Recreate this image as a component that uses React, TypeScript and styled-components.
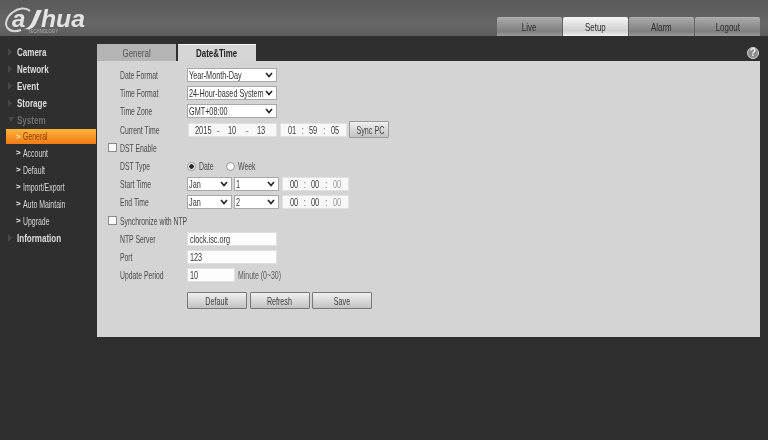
import type { ReactNode } from 'react';
import styled, { createGlobalStyle } from 'styled-components';

const topTabs = ['Live', 'Setup', 'Alarm', 'Logout'];
const subItems = ['General', 'Account', 'Default', 'Import/Export', 'Auto Maintain', 'Upgrade'];

function Logo() {
  return (
    <LogoSvg width="90" height="34" viewBox="0 0 90 34">
      <path d="M30 11 C26 7 18 8 12.5 12.5 C6.5 17 4.5 24 7.5 28 C10 31 15 32 21 30" fill="none" stroke="#d8d8d8" strokeWidth="2" />
      <text x="12" y="27" fontFamily="Liberation Sans" fontWeight="bold" fontStyle="italic" fontSize="24" fill="#e4e4e4">a</text>
      <path d="M24 29 C28 28.5 30 26 32 22 L37 10 L42 10 L35.5 24.5 C33.5 28 30 30 24 29 Z" fill="#e4e4e4" />
      <text x="41" y="27" fontFamily="Liberation Sans" fontWeight="bold" fontStyle="italic" fontSize="24" fill="#e4e4e4" textLength="44" lengthAdjust="spacingAndGlyphs">hua</text>
      <text x="28" y="32.5" fontFamily="Liberation Sans" fontSize="4.5" fill="#b4b4b4" textLength="30" lengthAdjust="spacingAndGlyphs">TECHNOLOGY</text>
    </LogoSvg>
  );
}

function SelectBox({ w, children }: { w: number; children: ReactNode }) {
  return (
    <Select $w={w}>
      <SelectText>{children}</SelectText>
      <svg width="8" height="6" viewBox="0 0 8 6">
        <path d="M1 1 L4 4.5 L7 1" fill="none" stroke="#222222" strokeWidth="1.6" />
      </svg>
    </Select>
  );
}

function TimeField({ values, wide, faded }: { values: string[]; wide?: boolean; faded?: boolean }) {
  const sep = wide ? '-' : ':';
  return (
    <Field $wide={wide}>
      <FieldValue>{values[0]}</FieldValue>
      <Sep>{sep}</Sep>
      <FieldValue>{values[1]}</FieldValue>
      <Sep>{sep}</Sep>
      <FieldValue $faded={faded}>{values[2]}</FieldValue>
    </Field>
  );
}

export default function App() {
  return (
    <Page>
      <GlobalStyle />
      <Header>
        <Logo />
        <TopTabs>
          {topTabs.map((t) => (
            <TopTab key={t} $active={t === 'Setup'}><Squeezed>{t}</Squeezed></TopTab>
          ))}
        </TopTabs>
      </Header>
      <Main>
        <Sidebar>
          {['Camera', 'Network', 'Event', 'Storage'].map((m) => (
            <MenuItem key={m}><Tri /><MenuText>{m}</MenuText></MenuItem>
          ))}
          <MenuItem $dim><TriDown /><MenuText>System</MenuText></MenuItem>
          {subItems.map((s) => (
            <SubItem key={s} $active={s === 'General'}>
              <Chevron $active={s === 'General'}>&gt;</Chevron>
              <SubText>{s}</SubText>
            </SubItem>
          ))}
          <MenuItem><Tri /><MenuText>Information</MenuText></MenuItem>
        </Sidebar>
        <Content>
          <TabRow>
            <Tabs>
              <Tab><Squeezed>General</Squeezed></Tab>
              <Tab $active><Squeezed>Date&amp;Time</Squeezed></Tab>
            </Tabs>
            <Help>?</Help>
          </TabRow>
          <Panel>
            <Row>
              <Label>Date Format</Label>
              <SelectBox w={90}>Year-Month-Day</SelectBox>
            </Row>
            <Row>
              <Label>Time Format</Label>
              <SelectBox w={90}>24-Hour-based System</SelectBox>
            </Row>
            <Row>
              <Label>Time Zone</Label>
              <SelectBox w={90}>GMT+08:00</SelectBox>
            </Row>
            <Row>
              <Label>Current Time</Label>
              <TimeField wide values={['2015', '10', '13']} />
              <TimeField values={['01', '59', '05']} />
              <SyncButton><ButtonText>Sync PC</ButtonText></SyncButton>
            </Row>
            <CheckRow>
              <Check type="checkbox" />
              <Label>DST Enable</Label>
            </CheckRow>
            <Row>
              <Label>DST Type</Label>
              <RadioGroup>
                <Radio type="radio" name="dst" defaultChecked />
                <RadioText>Date</RadioText>
                <Radio type="radio" name="dst" />
                <RadioText>Week</RadioText>
              </RadioGroup>
            </Row>
            <Row>
              <Label>Start Time</Label>
              <SelectBox w={45}>Jan</SelectBox>
              <SelectBox w={45}>1</SelectBox>
              <TimeField faded values={['00', '00', '00']} />
            </Row>
            <Row>
              <Label>End Time</Label>
              <SelectBox w={45}>Jan</SelectBox>
              <SelectBox w={45}>2</SelectBox>
              <TimeField faded values={['00', '00', '00']} />
            </Row>
            <CheckRow>
              <Check type="checkbox" />
              <Label>Synchronize with NTP</Label>
            </CheckRow>
            <Row>
              <Label>NTP Server</Label>
              <TextBox $w={90}><SelectText>clock.isc.org</SelectText></TextBox>
            </Row>
            <Row>
              <Label>Port</Label>
              <TextBox $w={90}><SelectText>123</SelectText></TextBox>
            </Row>
            <Row>
              <Label>Update Period</Label>
              <TextBox $w={48}><SelectText>10</SelectText></TextBox>
              <Hint>Minute (0~30)</Hint>
            </Row>
            <ButtonRow>
              <ActionButton><ButtonText>Default</ButtonText></ActionButton>
              <ActionButton><ButtonText>Refresh</ButtonText></ActionButton>
              <ActionButton><ButtonText>Save</ButtonText></ActionButton>
            </ButtonRow>
          </Panel>
        </Content>
      </Main>
    </Page>
  );
}

const GlobalStyle = createGlobalStyle`
  html, body {
    margin: 0;
    padding: 0;
    background: #2f2f2f;
  }
`;

const Page = styled.div`
  width: 768px;
  height: 440px;
  overflow: hidden;
  background: #2f2f2f;
  font-family: "Liberation Sans", Arial, sans-serif;
  filter: blur(0.3px);
`;

// The reference text is squashed horizontally, so text gets a scaleX
const Squeezed = styled.span`
  display: inline-block;
  white-space: nowrap;
  transform: scaleX(0.72);
`;

const ButtonText = styled(Squeezed)`
  transform: scaleX(0.68);
`;

const Header = styled.header`
  height: 36px;
  display: flex;
  justify-content: space-between;
  align-items: flex-end;
  padding-right: 8px;
  background: linear-gradient(#5a5a5a, #666666 70%, #5c5c5c);
`;

const LogoSvg = styled.svg`
  align-self: flex-start;
`;

const TopTabs = styled.nav`
  display: flex;
  gap: 1px;
`;

const TopTab = styled.div<{ $active?: boolean }>`
  width: 65px;
  height: 19px;
  box-sizing: border-box;
  display: flex;
  align-items: center;
  justify-content: center;
  font-size: 11px;
  border-radius: 2px 2px 0 0;
  color: #2c2c2c;
  border-top: 1px solid ${(p) => (p.$active ? '#f5f5f5' : '#b0b0b0')};
  background: ${(p) =>
    p.$active
      ? 'linear-gradient(#f4f4f4, #cfcfcf 70%, #eeeeee)'
      : 'linear-gradient(#a8a8a8, #7f7f7f 75%, #9a9a9a)'};
`;

const Main = styled.main`
  display: flex;
`;

const Sidebar = styled.aside`
  width: 97px;
  flex-shrink: 0;
  padding-top: 7px;
  display: flex;
  flex-direction: column;
`;

const MenuItem = styled.div<{ $dim?: boolean }>`
  height: 17px;
  flex-shrink: 0;
  display: flex;
  align-items: center;
  padding-left: 8px;
  font-size: 11px;
  font-weight: bold;
  color: ${(p) => (p.$dim ? '#6f6f6f' : '#dddddd')};
`;

const MenuText = styled(Squeezed)`
  transform: scaleX(0.73);
  transform-origin: left center;
`;

const Tri = styled.span`
  width: 0;
  height: 0;
  margin-right: 5px;
  border-left: 4px solid #474747;
  border-top: 4px solid transparent;
  border-bottom: 4px solid transparent;
`;

const TriDown = styled.span`
  width: 0;
  height: 0;
  margin-right: 3px;
  border-top: 5px solid #474747;
  border-left: 3px solid transparent;
  border-right: 3px solid transparent;
`;

const SubItem = styled.div<{ $active?: boolean }>`
  height: ${(p) => (p.$active ? '15px' : '17px')};
  margin: ${(p) => (p.$active ? '0.5px 1px 0.5px 6px' : '0 1px 0 6px')};
  flex-shrink: 0;
  display: flex;
  align-items: center;
  padding-left: 10px;
  font-size: 10.5px;
  color: ${(p) => (p.$active ? '#8a3c00' : '#d8d8d8')};
  background: ${(p) => (p.$active ? 'linear-gradient(#ffb63c, #f07c14)' : 'none')};
`;

const SubText = styled(Squeezed)`
  transform: scaleX(0.66);
  transform-origin: left center;
`;

const Chevron = styled.span<{ $active?: boolean }>`
  width: 7px;
  font-size: 8px;
  font-weight: bold;
  color: ${(p) => (p.$active ? '#ffe6b0' : '#f0f0f0')};
`;

const Content = styled.section`
  width: 663px;
  padding-top: 8px;
  display: flex;
  flex-direction: column;
`;

const TabRow = styled.div`
  display: flex;
  justify-content: space-between;
  align-items: center;
  height: 17px;
`;

const Tabs = styled.div`
  display: flex;
  gap: 2px;
`;

const Tab = styled.div<{ $active?: boolean }>`
  width: ${(p) => (p.$active ? '78px' : '79px')};
  height: 17px;
  display: flex;
  align-items: center;
  justify-content: center;
  font-size: 11px;
  color: ${(p) => (p.$active ? '#1e1e1e' : '#555555')};
  font-weight: ${(p) => (p.$active ? 'bold' : 'normal')};
  background: ${(p) => (p.$active ? '#d6d6d6' : '#b4b4b4')};
  box-sizing: border-box;
  border-top: 1px solid ${(p) => (p.$active ? '#f4f4f4' : '#b4b4b4')};
`;

const Help = styled.div`
  width: 12px;
  height: 12px;
  box-sizing: border-box;
  border: 1px solid #d8d8d8;
  border-radius: 50%;
  background: #8c8c8c;
  color: #f2f2f2;
  font-size: 10px;
  font-weight: bold;
  line-height: 10px;
  text-align: center;
  margin-right: 1px;
`;

const Panel = styled.div`
  height: 276px;
  box-sizing: border-box;
  padding: 5px 0 0 23px;
  background: #d4d4d4;
  font-size: 10.5px;
  color: #4a4a4a;
`;

const Row = styled.div`
  height: 18.2px;
  display: flex;
  align-items: center;
  gap: 2px;
`;

const CheckRow = styled(Row)`
  margin-left: -12px;
  gap: 3px;
`;

const Label = styled.label`
  width: 65px;
  flex-shrink: 0;
  white-space: nowrap;
  color: #4a4a4a;
  transform: scaleX(0.65);
  transform-origin: left center;
`;

const Check = styled.input`
  appearance: none;
  width: 9px;
  height: 9px;
  margin: 0;
  background: #fafafa;
  border: 1px solid #8a8a8a;
  box-sizing: border-box;
`;

const RadioGroup = styled.div`
  display: flex;
  align-items: center;
`;

const Radio = styled.input`
  appearance: none;
  width: 9px;
  height: 9px;
  margin: 0 3px 0 0;
  box-sizing: border-box;
  border: 1px solid #9a9a9a;
  border-radius: 50%;
  background: #f8f8f8;

  &:checked {
    background: radial-gradient(circle, #222222 0 2px, #f8f8f8 2.5px);
  }
`;

const RadioText = styled(Squeezed)`
  width: 27px;
  transform: scaleX(0.66);
  transform-origin: left center;
`;

const Select = styled.div<{ $w: number }>`
  width: ${(p) => p.$w}px;
  height: 14px;
  box-sizing: border-box;
  padding: 0 3px 0 1px;
  display: flex;
  align-items: center;
  justify-content: space-between;
  border: 1px solid #a8a8a8;
  background: #ffffff;
  color: #333333;
  font-size: 11px;
`;

const SelectText = styled(Squeezed)`
  width: 0;
  transform: scaleX(0.66);
  transform-origin: left center;
`;

const Field = styled.div<{ $wide?: boolean }>`
  width: ${(p) => (p.$wide ? '89px' : '67px')};
  height: 14px;
  margin-left: 1px;
  box-sizing: border-box;
  display: grid;
  grid-template-columns: 1fr 0 1fr 0 1fr;
  align-items: center;
  justify-items: center;
  background: #f8f8f8;
  border: 1px solid #e2e2e2;
  font-size: 11px;
`;

const Sep = styled.span`
  color: #8a8a8a;
`;

const FieldValue = styled(Squeezed)<{ $faded?: boolean }>`
  transform: scaleX(0.68);
  color: ${(p) => (p.$faded ? '#9a9a9a' : '#3c3c3c')};
`;

const TextBox = styled.div<{ $w: number }>`
  width: ${(p) => p.$w}px;
  height: 14px;
  box-sizing: border-box;
  padding-left: 2px;
  display: flex;
  align-items: center;
  background: #fdfdfd;
  border: 1px solid #e0e0e0;
  color: #333333;
  font-size: 11px;
`;

const Hint = styled(Squeezed)`
  margin-left: 1px;
  color: #5a5a5a;
  transform: scaleX(0.66);
  transform-origin: left center;
`;

const SyncButton = styled.button`
  width: 40px;
  height: 17px;
  box-sizing: border-box;
  padding: 0;
  font-family: inherit;
  font-size: 10.5px;
  color: #3c3c3c;
  background: linear-gradient(#f0f0f0, #c2c2c2);
  border: 1px solid #9a9a9a;
  border-radius: 1px;
`;

const ButtonRow = styled.div`
  display: flex;
  gap: 2.5px;
  margin: 8px 0 0 67px;
`;

const ActionButton = styled(SyncButton)`
  width: 60px;
  border-color: #777777;
`;
